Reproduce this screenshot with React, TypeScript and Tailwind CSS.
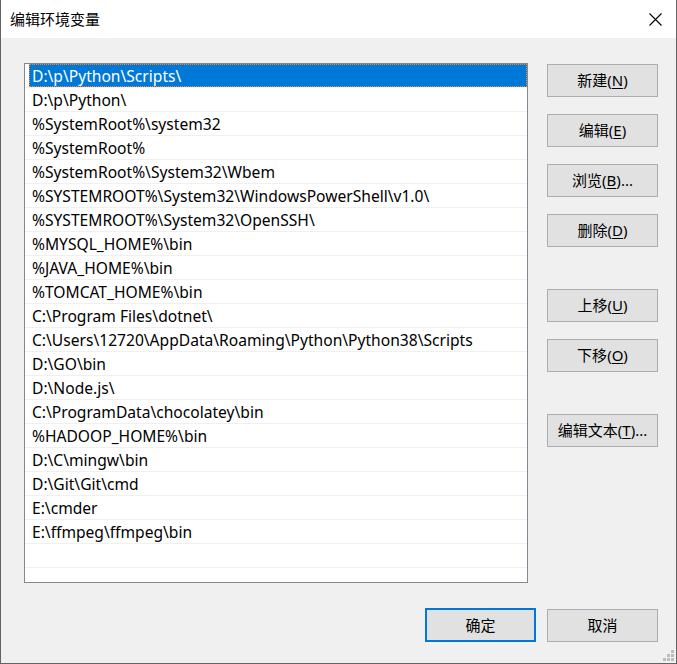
import React from "react";

const items = [
  "D:\\p\\Python\\Scripts\\",
  "D:\\p\\Python\\",
  "%SystemRoot%\\system32",
  "%SystemRoot%",
  "%SystemRoot%\\System32\\Wbem",
  "%SYSTEMROOT%\\System32\\WindowsPowerShell\\v1.0\\",
  "%SYSTEMROOT%\\System32\\OpenSSH\\",
  "%MYSQL_HOME%\\bin",
  "%JAVA_HOME%\\bin",
  "%TOMCAT_HOME%\\bin",
  "C:\\Program Files\\dotnet\\",
  "C:\\Users\\12720\\AppData\\Roaming\\Python\\Python38\\Scripts",
  "D:\\GO\\bin",
  "D:\\Node.js\\",
  "C:\\ProgramData\\chocolatey\\bin",
  "%HADOOP_HOME%\\bin",
  "D:\\C\\mingw\\bin",
  "D:\\Git\\Git\\cmd",
  "E:\\cmder",
  "E:\\ffmpeg\\ffmpeg\\bin",
  "",
  "",
];

function Btn({
  label,
  mn,
  suffix = "",
  def = false,
}: {
  label: string;
  mn?: string;
  suffix?: string;
  def?: boolean;
}) {
  return (
    <div
      className={
        def
          ? "w-[111px] h-[34px] bg-[#e1e1e1] border-2 border-[#0078d7] flex items-center justify-center text-[15px] text-black"
          : "w-[111px] h-[33px] bg-[#e1e1e1] border border-[#adadad] flex items-center justify-center text-[15px] text-black"
      }
    >
      <span>
        {label}
        {mn ? (
          <>
            (<span className="underline underline-offset-2">{mn}</span>){suffix}
          </>
        ) : null}
      </span>
    </div>
  );
}

export default function App() {
  return (
    <div
      className="w-[677px] h-[664px] bg-[#f0f0f0] border-l border-r border-b border-[#646464] flex flex-col"
      style={{ fontFamily: "'Noto Sans', 'Noto Sans CJK SC', sans-serif" }}
    >
      <div className="h-[38px] bg-white flex items-center justify-between pl-[9px] pr-[14px] shrink-0">
        <span className="text-[15px] text-black">编辑环境变量</span>
        <svg width="13" height="13" viewBox="0 0 13 13">
          <path d="M0.5 0.5 L12.5 12.5 M12.5 0.5 L0.5 12.5" stroke="#000" strokeWidth="1.1" fill="none" />
        </svg>
      </div>
      <div className="flex pl-[23px] pr-[18px] pt-[25px] gap-[19px]">
        <div className="w-[504px] h-[520px] bg-white border border-[#828790] overflow-hidden">
          {items.map((t, i) => (
            <div
              key={i}
              className="h-[24px] border-b border-[#f0f0f0] pl-[4px] pr-0"
            >
              {i === 0 ? (
                <div className="h-[23px] bg-[#0078d7] border border-dotted border-[#ff8728] text-white text-[15.6px] leading-[23px] pl-[2px] whitespace-nowrap">
                  {t}
                </div>
              ) : (
                <div className="h-[23px] text-black text-[15.6px] leading-[25px] pl-[3px] whitespace-nowrap">
                  {t}
                </div>
              )}
            </div>
          ))}
        </div>
        <div className="flex flex-col pt-[1px]">
          <div className="flex flex-col gap-[17px]">
            <Btn label="新建" mn="N" />
            <Btn label="编辑" mn="E" />
            <Btn label="浏览" mn="B" suffix="..." />
            <Btn label="删除" mn="D" />
          </div>
          <div className="flex flex-col gap-[17px] mt-[42px]">
            <Btn label="上移" mn="U" />
            <Btn label="下移" mn="O" />
          </div>
          <div className="mt-[42px]">
            <Btn label="编辑文本" mn="T" suffix="..." />
          </div>
        </div>
      </div>
      <div className="flex justify-end gap-[11px] pr-[18px] pt-[25px]">
        <Btn label="确定" def />
        <div className="pt-[1px]">
          <Btn label="取消" />
        </div>
      </div>
      <div className="flex-1 flex items-end justify-end pr-[2px] pb-[2px]">
        <svg width="11" height="11" viewBox="0 0 11 11">
          <rect x="8" y="0" width="3" height="3" fill="#bcbcbc" />
          <rect x="4" y="4" width="3" height="3" fill="#bcbcbc" />
          <rect x="8" y="4" width="3" height="3" fill="#bcbcbc" />
          <rect x="0" y="8" width="3" height="3" fill="#bcbcbc" />
          <rect x="4" y="8" width="3" height="3" fill="#bcbcbc" />
          <rect x="8" y="8" width="3" height="3" fill="#bcbcbc" />
        </svg>
      </div>
    </div>
  );
}
